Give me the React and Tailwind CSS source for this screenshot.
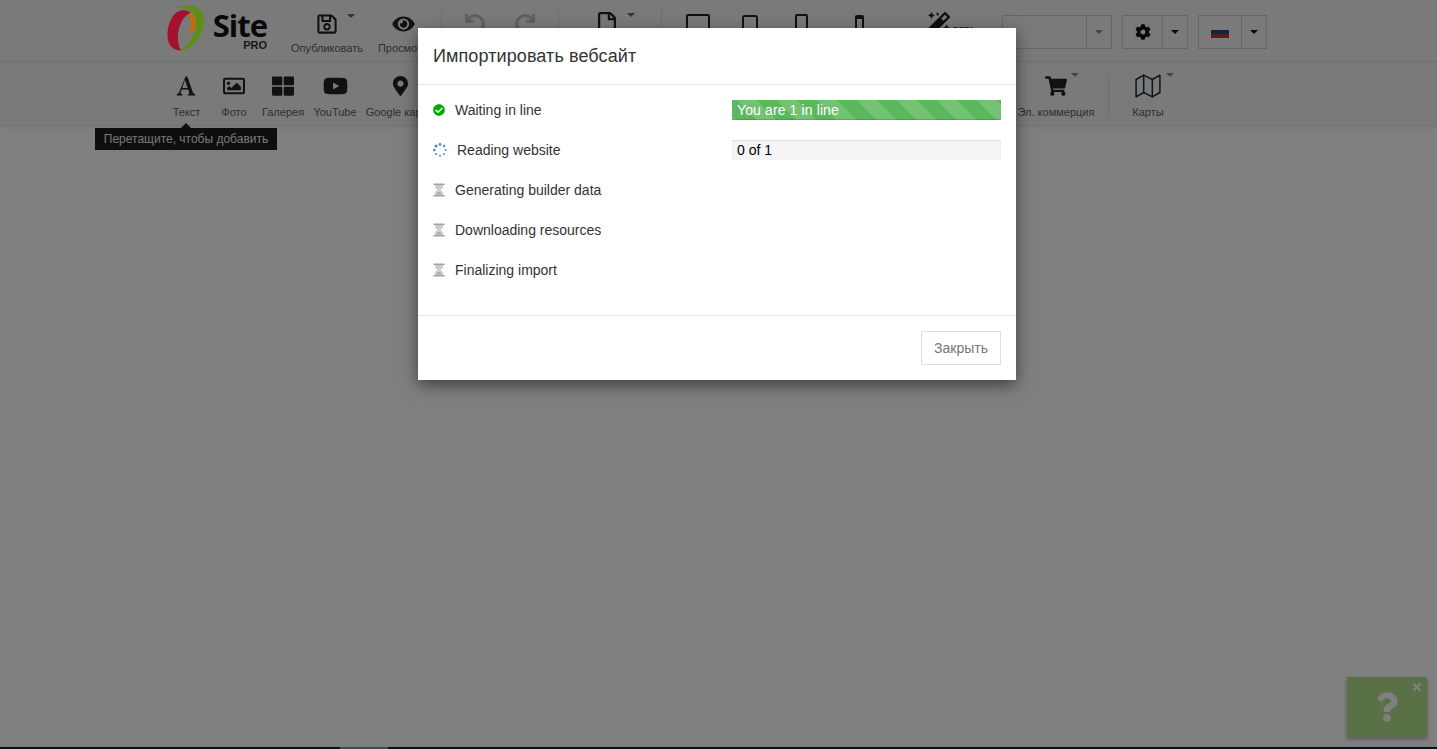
import React from "react";
import { FaCheckCircle, FaEye, FaRegSave, FaUndo, FaRedo, FaRegFile, FaMagic, FaCog, FaRegImage, FaThLarge, FaYoutube, FaMapMarkerAlt, FaShoppingCart, FaQuestion, FaTimes } from "react-icons/fa";
import { FiMap } from "react-icons/fi";

const Caret = ({ className = "" }) => (
  <span className={"block w-0 h-0 border-x-[4px] border-x-transparent border-t-[4px] " + className} />
);

const Sep = ({ className = "" }) => <span className={"block w-px h-[45px] bg-[#dcdcdc] " + className} />;

const Logo = () => (
  <svg width="38" height="46" viewBox="0 0 38 46" className="block relative z-10 shrink-0">
    <path d="M10 3C16 0 26 -1 32 4C38 9 38 20 34 29C29 39 21 46 13 45.5C18 43 24 37 27 29C29 24 29.5 20 29 16C29 10 26 6 22 5C18 3.5 14 3 10 3Z" fill="#5c8f14" />
    <path d="M24 7C17 3.5 10 5 6 11C1 18 -0.5 28 1 35C2 41 7 45.5 14 45.5C11.5 41 10.5 36 11 30C11.5 24 13 19 15.5 15C17.5 12 20.5 9.5 24 7Z" fill="#a5102d" />
    <path d="M21 9C24 8 27 9 28 12C29.5 16 29.5 20 28 25L21.5 29C24 22 24.5 15 21 9Z" fill="#b96f12" />
  </svg>
);

const TextIcon = () => (
  <svg width="21" height="20" viewBox="0 0 21 20" className="block">
    <path d="M9.6 0.5H11.3L16.9 16.6C17.2 17.5 17.8 17.9 19.2 18V19.5H11.9V18C13.2 17.9 13.6 17.6 13.3 16.7L12.2 13.4H5.7L4.7 16.4C4.4 17.4 4.9 17.9 6.4 18V19.5H0.8V18C2 17.9 2.7 17.4 3.1 16.3ZM6.2 11.9H11.7L8.9 3.8Z" fill="#222" />
  </svg>
);

const Top = ({ w, label, children }) => (
  <div className={"flex flex-col items-center shrink-0 " + w}>
    <div className="h-[24px] flex items-center justify-center relative">{children}</div>
    <span className="mt-[6px] text-[11px] leading-[13px] whitespace-nowrap text-[#55606b]">{label}</span>
  </div>
);

const Tool = ({ w, label, children, caret }) => (
  <div className={"flex flex-col items-center shrink-0 " + w}>
    <div className="h-[26px] flex items-center justify-center relative">
      {children}
      {caret && <Caret className="absolute -right-[12px] top-0 border-t-[#8c8c8c]" />}
    </div>
    <span className="mt-[7px] text-[11px] leading-[13px] whitespace-nowrap text-[#55606b]">{label}</span>
  </div>
);

const Split = ({ w, children, dark = true, wr = "w-[25px]" }) => (
  <div className={"h-[34px] flex border border-[#cfcfcf] " + w}>
    <div className="flex-1 flex items-center justify-center">{children}</div>
    <div className={"border-l border-[#cfcfcf] flex items-center justify-center " + wr}>
      <Caret className={dark ? "border-t-[#111]" : "border-t-[#888]"} />
    </div>
  </div>
);

const Row = ({ icon, label, gap = "ml-[10px]", children }) => (
  <div className="h-[40px] flex items-center">
    <div className="w-[299px] flex items-center shrink-0">
      {icon}
      <span className={"text-[14px] text-[#333] " + gap}>{label}</span>
    </div>
    {children}
  </div>
);

const Hour = () => (
  <svg width="12" height="14" viewBox="0 0 12 14" className="block">
    <path d="M2 2H10V4.5C10 5.8 8 6.2 7.4 7C8 7.8 10 8.2 10 9.5V12H2V9.5C2 8.2 4 7.8 4.6 7C4 6.2 2 5.8 2 4.5Z" fill="#cfcfcf" />
    <rect x="0.5" y="0.5" width="11" height="1.6" fill="#a0a0a0" />
    <rect x="0.5" y="11.9" width="11" height="1.6" fill="#a0a0a0" />
    <path d="M3 11C4 9.8 5 9.5 6 9C7 9.5 8 9.8 9 11Z" fill="#a6a6a6" />
  </svg>
);

const Spinner = () => (
  <svg width="14" height="14" viewBox="0 0 14 14" className="block">
    {[[7, 1.4, 1.4], [11, 3, 1.2], [12.7, 7, 1], [11, 11, 0.9], [7, 12.7, 1], [3, 11, 1.1], [1.3, 7, 1.3], [3, 3, 1.5]].map(([x, y, r], i) => (
      <circle key={i} cx={x} cy={y} r={r} fill="#428bca" />
    ))}
  </svg>
);

export default function App() {
  return (
    <div className="relative w-full h-[749px] overflow-hidden bg-white font-['Liberation_Sans',Arial,sans-serif]">
      <div className="h-[125px] bg-[#f5f5f5] shadow-[0_1px_4px_rgba(0,0,0,0.15)]">
        <div className="h-[62px] border-b border-[#e0e0e0] flex items-start pl-[167px]">
          <div className="w-[110px] shrink-0 flex items-start pt-[5px]">
            <Logo />
            <div className="ml-[8px] w-[54px] flex flex-col items-end">
              <span className="mt-[5px] text-[31px] leading-[30px] font-bold text-[#111] font-['Open_Sans',sans-serif] tracking-[-1px] whitespace-nowrap">Site</span>
              <span className="text-[11px] leading-[10px] font-bold text-[#333]">PRO</span>
            </div>
          </div>
          <div className="flex items-start pt-[12px]">
            <Top w="w-[100px]" label="Опубликовать">
              <FaRegSave className="w-[22px] h-[22px] text-[#222]" />
              <Caret className="absolute -right-[17px] top-[2px] border-t-[#666]" />
            </Top>
            <Top w="w-[52px]" label="Просмотр">
              <FaEye className="w-[23px] h-[20px] text-[#222]" />
            </Top>
            <Sep className="ml-[12px] -mt-[2px]" />
            <div className="flex items-center ml-[23px] h-[24px] gap-[30px] text-[#bdbdbd]">
              <FaUndo className="w-[20px] h-[20px]" />
              <FaRedo className="w-[20px] h-[20px]" />
            </div>
            <Sep className="ml-[23px] -mt-[2px]" />
            <div className="ml-[38px] h-[24px] flex items-start relative">
              <FaRegFile className="w-[20px] h-[24px] text-[#222]" />
              <Caret className="absolute -right-[18px] top-[1px] border-t-[#666]" />
            </div>
            <Sep className="ml-[44px] -mt-[2px]" />
            <div className="ml-[24px] flex items-start pt-[2px] h-[24px]">
              <span className="block w-[24px] h-[20px] border-2 border-[#222] rounded-[2px]" />
              <span className="block w-[16px] h-[18px] mt-[1px] ml-[32px] border-2 border-[#222] rounded-[3px]" />
              <span className="block w-[13px] h-[20px] ml-[37px] border-2 border-[#222] rounded-[2px]" />
              <span className="block w-[9px] h-[18px] mt-[1px] ml-[47px] border-2 border-t-[4px] border-[#222] rounded-[2px]" />
            </div>
            <FaMagic className="ml-[64px] w-[22px] h-[22px] text-[#222] shrink-0" />
            <span className="ml-[3px] mt-[13px] text-[8px] leading-[10px] font-bold text-[#333]">BETA</span>
          </div>
          <div className="ml-auto mr-[170px] pt-[15px] flex gap-[10px]">
            <Split w="w-[110px]" dark={false}><span /></Split>
            <Split w="w-[66px]"><FaCog className="w-[16px] h-[16px] text-[#111]" /></Split>
            <Split w="w-[69px]"><span className="flex flex-col w-[18px] h-[12px]"><span className="flex-1 bg-[#f5f5f5]" /><span className="flex-1 bg-[#1c4f8c]" /><span className="flex-1 bg-[#b5342a]" /></span></Split>
          </div>
        </div>
        <div className="h-[63px] flex items-start pt-[11px] pl-[163px]">
          <Tool w="w-[47px]" label="Текст"><TextIcon /></Tool>
          <Tool w="w-[48px]" label="Фото"><FaRegImage className="w-[24px] h-[22px] text-[#222]" /></Tool>
          <Tool w="w-[50px]" label="Галерея"><FaThLarge className="w-[22px] h-[22px] text-[#222]" /></Tool>
          <Tool w="w-[54px]" label="YouTube"><FaYoutube className="w-[25px] h-[24px] text-[#222]" /></Tool>
          <Tool w="w-[76px]" label="Google карты"><FaMapMarkerAlt className="w-[15px] h-[20px] text-[#222]" /></Tool>
          <div className="ml-auto mr-[269px] flex items-start">
            <Tool w="w-[78px]" label="Эл. коммерция" caret><FaShoppingCart className="w-[22px] h-[20px] text-[#222]" /></Tool>
            <Sep className="ml-[13px] mr-[19px]" />
            <Tool w="w-[40px]" label="Карты" caret><FiMap strokeWidth={1.4} className="w-[28px] h-[26px] text-[#1c2a3a]" /></Tool>
          </div>
        </div>
      </div>

      <div className="absolute left-[95px] top-[128px] w-[182px] h-[22px] bg-[#1c1c1c] text-[#eee] text-[12px] leading-[22px] text-center">
        Перетащите, чтобы добавить
        <span className="absolute left-[86px] -top-[5px] w-0 h-0 border-x-[5px] border-x-transparent border-b-[5px] border-b-[#1c1c1c]" />
      </div>

      <div className="absolute left-[1347px] top-[677px] w-[80px] h-[60px] bg-[#b5e18c] shadow-[0_2px_4px_rgba(0,0,0,0.3)] flex items-center justify-center">
        <FaQuestion className="w-[22px] h-[30px] text-white" />
        <FaTimes className="absolute right-[4px] top-[4px] w-[12px] h-[12px] text-white" />
      </div>

      <div className="absolute left-0 right-0 bottom-0 h-[2px] bg-[#04283a]">
        <span className="block ml-[340px] w-[48px] h-full bg-[#8a9498]" />
      </div>

      <div className="absolute inset-0 bg-black/50" />

      <div className="absolute left-[418px] top-[28px] w-[598px] h-[352px] bg-white shadow-[0_5px_15px_rgba(0,0,0,0.5)] flex flex-col">
        <div className="h-[57px] border-b border-[#e5e5e5] px-[15px] flex items-center">
          <h4 className="text-[18px] text-[#333] tracking-[0.1px]">Импортировать вебсайт</h4>
        </div>
        <div className="h-[231px] px-[15px] pt-[5px] border-b border-[#e5e5e5]">
          <Row icon={<FaCheckCircle className="w-[12px] h-[12px] text-[#00a800]" />} label="Waiting in line">
            <div className="w-[269px] h-[20px] bg-[#5cb85c] bg-[linear-gradient(45deg,rgba(255,255,255,0.15)_25%,transparent_25%,transparent_50%,rgba(255,255,255,0.15)_50%,rgba(255,255,255,0.15)_75%,transparent_75%,transparent)] bg-[length:40px_40px] bg-[position:5px_0] shadow-[inset_0_-1px_0_rgba(0,0,0,0.15)] pl-[5px] text-[14px] leading-[20px] text-white tracking-[0.12px]">You are 1 in line</div>
          </Row>
          <Row icon={<Spinner />} label="Reading website">
            <div className="w-[269px] h-[20px] bg-[#f5f5f5] shadow-[inset_0_1px_2px_rgba(0,0,0,0.1)] pl-[5px] text-[14px] leading-[20px] text-black">0 of 1</div>
          </Row>
          <Row icon={<Hour />} label="Generating builder data" />
          <Row icon={<Hour />} label="Downloading resources" />
          <Row icon={<Hour />} label="Finalizing import" />
        </div>
        <div className="flex-1 px-[15px] flex items-center justify-end">
          <button className="w-[80px] h-[34px] border border-[#ddd] text-[14px] text-[#777] bg-white">Закрыть</button>
        </div>
      </div>
    </div>
  );
}
